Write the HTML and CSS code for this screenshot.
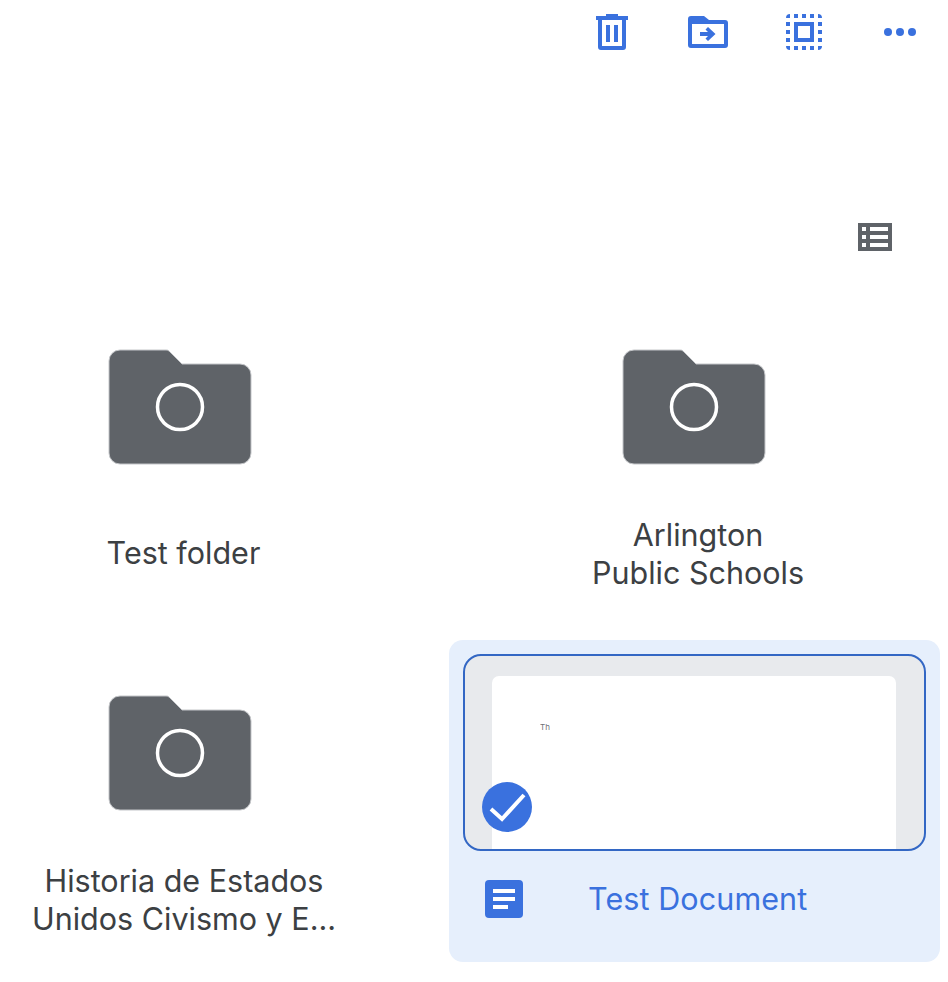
FILE: index.html
```html
<!DOCTYPE html>
<html lang="en">
<head>
<meta charset="utf-8">
<title>Drive</title>
<link rel="stylesheet" href="styles.css">
</head>
<body>
<header class="toolbar">
  <svg class="tool tool-trash" viewBox="0 0 32 36" width="32" height="36"><path fill="#3a71de" fill-rule="evenodd" d="M10 0h12v2h10v4h-2v27a3 3 0 0 1-3 3H5a3 3 0 0 1-3-3V6H0V2h10zM6 6v26h20V6zm4 5h4v17h-4zm8 0h4v17h-4z"/></svg>
  <svg class="tool tool-move" viewBox="0 0 40 32" width="40" height="32"><path fill="#3a71de" fill-rule="evenodd" d="M3 0h13l5 4h16a3 3 0 0 1 3 3v22a3 3 0 0 1-3 3H3a3 3 0 0 1-3-3V3a3 3 0 0 1 3-3zM4 8v20h32V8zm16 3 7.500 7-7.500 7-2.500-2.500 2.500-2.500H12v-4h8l-2.500-2.500z"/></svg>
  <svg class="tool tool-select" viewBox="0 0 36 36" width="36" height="36"><g fill="#3a71de"><path fill-rule="evenodd" d="M8 8h20v20H8zm4 4v12h12V12z"/><path d="M4 0v4H0a4 4 0 0 1 4-4zM8 0h4v4H8zM16 0h4v4h-4zM24 0h4v4h-4zM32 0a4 4 0 0 1 4 4h-4zM0 8h4v4H0zM0 16h4v4H0zM0 24h4v4H0zM32 8h4v4h-4zM32 16h4v4h-4zM32 24h4v4h-4zM0 32h4v4a4 4 0 0 1-4-4zM8 32h4v4H8zM16 32h4v4h-4zM24 32h4v4h-4zM32 32h4a4 4 0 0 1-4 4z"/></g></svg>
  <svg class="tool tool-more" viewBox="0 0 32 10" width="32" height="10"><g fill="#3a71de"><circle cx="4" cy="5" r="4"/><circle cx="16" cy="5" r="4"/><circle cx="28" cy="5" r="4"/></g></svg>
</header>

<div class="view-row">
  <svg viewBox="0 0 34 28" width="34" height="28"><path fill="#5f6368" fill-rule="evenodd" d="M0 0h34v28H0zM4 4v4h4V4zm8 0v4h18V4zM4 12v4h4v-4zm8 0v4h18v-4zM4 20v4h4v-4zm8 0v4h18v-4z"/></svg>
</div>

<main class="grid">
  <article class="item item-first">
    <svg class="folder" viewBox="0 0 144 116" width="144" height="116"><path fill="#5f6368" stroke="#c4c6c9" stroke-width="1" d="M12 1h46a4 4 0 0 1 3 1l13 13h58a11 11 0 0 1 11 11v78a11 11 0 0 1-11 11H12a11 11 0 0 1-11-11V12A11 11 0 0 1 12 1z"/><circle cx="72" cy="58" r="22.500" fill="none" stroke="#fff" stroke-width="3.500"/></svg>
    <p class="name name-single">Test folder</p>
  </article>
  <article class="item item-first">
    <svg class="folder folder-right" viewBox="0 0 144 116" width="144" height="116"><path fill="#5f6368" stroke="#c4c6c9" stroke-width="1" d="M12 1h46a4 4 0 0 1 3 1l13 13h58a11 11 0 0 1 11 11v78a11 11 0 0 1-11 11H12a11 11 0 0 1-11-11V12A11 11 0 0 1 12 1z"/><circle cx="72" cy="58" r="22.500" fill="none" stroke="#fff" stroke-width="3.500"/></svg>
    <p class="name">Arlington<br>Public Schools</p>
  </article>
  <article class="item item-second">
    <svg class="folder" viewBox="0 0 144 116" width="144" height="116"><path fill="#5f6368" stroke="#c4c6c9" stroke-width="1" d="M12 1h46a4 4 0 0 1 3 1l13 13h58a11 11 0 0 1 11 11v78a11 11 0 0 1-11 11H12a11 11 0 0 1-11-11V12A11 11 0 0 1 12 1z"/><circle cx="72" cy="58" r="22.500" fill="none" stroke="#fff" stroke-width="3.500"/></svg>
    <p class="name">Historia de Estados<br>Unidos Civismo y E...</p>
  </article>
  <article class="card">
    <div class="thumb">
      <div class="page"><span class="page-text">Th</span></div>
      <svg class="check" viewBox="0 0 50 50" width="50" height="50"><circle cx="25" cy="25" r="25" fill="#3a71de"/><path d="M9 27l11 10 22-24" fill="none" stroke="#fff" stroke-width="4"/></svg>
    </div>
    <div class="doc-row">
      <svg class="doc-icon" viewBox="0 0 38 38" width="38" height="38"><rect width="38" height="38" rx="4" fill="#3a71de"/><path fill="#fff" d="M8 9h22v4H8zM8 17h22v4H8zM8 25h15v4H8z"/></svg>
      <span class="doc-name">Test Document</span>
    </div>
  </article>
</main>
</body>
</html>
```

FILE: styles.css
```css
* {
  box-sizing: border-box;
}

html,
body {
  margin: 0;
  padding: 0;
  background: #fff;
}

body {
  width: 948px;
  height: 982px;
  overflow: hidden;
  font-family: Inter, Roboto, "Liberation Sans", sans-serif;
  color: #3c4043;
}

.toolbar {
  height: 64px;
  padding: 14px 32px 0 596px;
  display: flex;
  align-items: flex-start;
}

.tool {
  display: block;
  flex: none;
}

.tool-move {
  margin: 2px 0 0 60px;
}

.tool-select {
  margin-left: 58px;
}

.tool-more {
  margin: 13px 0 0 62px;
}

.view-row {
  height: 266px;
  padding: 159px 56px 0 0;
  display: flex;
  justify-content: flex-end;
  align-items: flex-start;
}

.view-row svg {
  display: block;
}

.grid {
  display: grid;
  grid-template-columns: 360px 491px;
  grid-template-rows: 310px 322px;
  column-gap: 89px;
}

.item {
  display: flex;
  flex-direction: column;
  align-items: center;
}

.item-first {
  padding-top: 19px;
}

.item-second {
  padding-top: 55px;
}

.folder {
  display: block;
  flex: none;
}

.folder-right {
  margin-right: 1px;
}

.name {
  margin: 0;
  padding-left: 7px;
  font-size: 30.5px;
  line-height: 38px;
  text-align: center;
  white-space: nowrap;
}

.item-first .name {
  margin-top: 51px;
}

.item-first .name-single {
  margin-top: 69px;
}

.item-second .name {
  margin-top: 51px;
  padding-left: 8px;
}

.card {
  height: 322px;
  padding: 14px;
  background: #e6effc;
  border-radius: 14px;
}

.thumb {
  position: relative;
  height: 197px;
  padding: 20px 28px 0 27px;
  background: #e8eaed;
  border: 2px solid #3367c4;
  border-radius: 18px;
  overflow: hidden;
}

.page {
  height: 100%;
  padding: 46px 48px 0;
  background: #fff;
  border-radius: 7px 7px 0 0;
}

.page-text {
  display: block;
  font-size: 8px;
  line-height: 10px;
  color: #5f6368;
  opacity: 0.9;
}

.check {
  position: absolute;
  left: 17px;
  top: 126px;
  display: block;
}

.doc-row {
  position: relative;
  height: 96px;
  display: flex;
  align-items: center;
  padding-bottom: 1px;
}

.doc-icon {
  display: block;
  flex: none;
  margin: 1px 0 0 22px;
}

.doc-name {
  margin-left: 65px;
  font-size: 30.5px;
  line-height: 38px;
  letter-spacing: 0.1px;
  color: #3a71de;
  white-space: nowrap;
}
```
